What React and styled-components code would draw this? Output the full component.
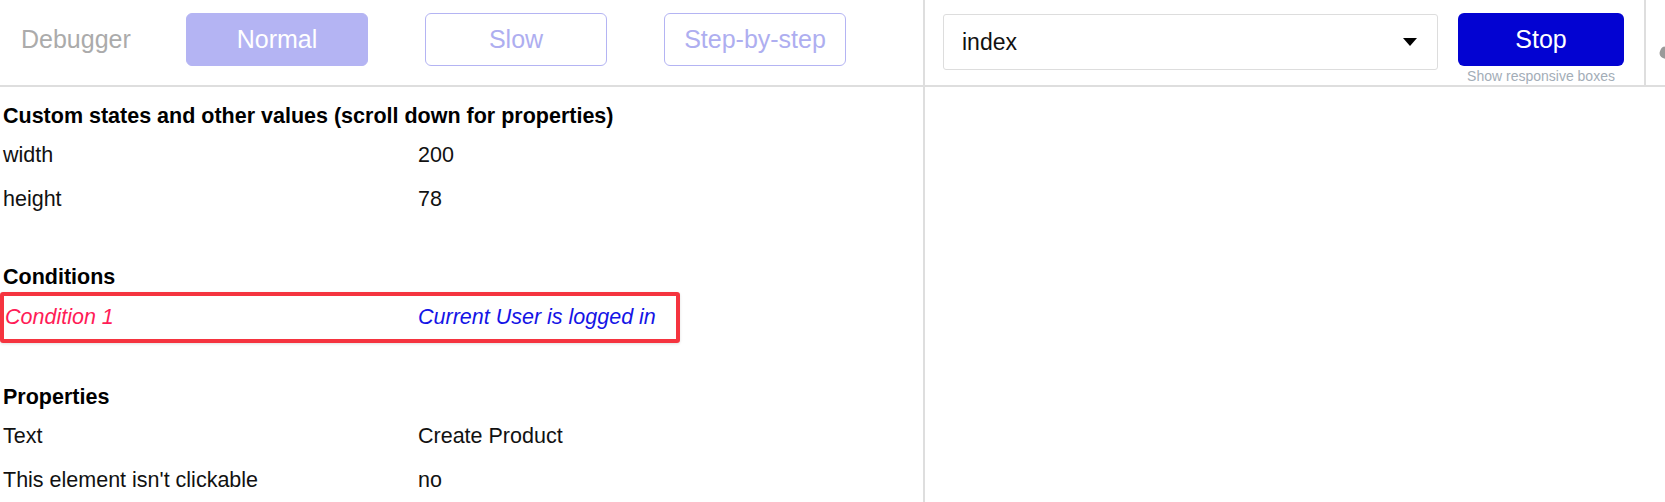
import React from 'react'
import styled, { createGlobalStyle } from 'styled-components'

const Global = createGlobalStyle`
  html, body {
    margin: 0;
    padding: 0;
    background: #fff;
    overflow: hidden;
    font-family: "Liberation Sans", Arial, Helvetica, sans-serif;
  }
`

const customStates = [
  { label: 'width', value: '200' },
  { label: 'height', value: '78' },
]

const properties = [
  { label: 'Text', value: 'Create Product' },
  { label: "This element isn't clickable", value: 'no' },
]

export default () => {
  return (
    <>
      <Global />
      <Page>
        <LeftPane>
          <Header>
            <Title>Debugger</Title>
            <ModeButton active>Normal</ModeButton>
            <ModeButton>Slow</ModeButton>
            <ModeButton>Step-by-step</ModeButton>
          </Header>
          <Content>
            <SectionTitle>Custom states and other values (scroll down for properties)</SectionTitle>
            {customStates.map(r => (
              <Row key={r.label}>
                <Label>{r.label}</Label>
                <Value>{r.value}</Value>
              </Row>
            ))}
            <SectionTitle spaced tight>Conditions</SectionTitle>
            <ConditionBox>
              <CondName>Condition 1</CondName>
              <CondText>Current User is logged in</CondText>
            </ConditionBox>
            <SectionTitle spaced>Properties</SectionTitle>
            {properties.map(r => (
              <Row key={r.label}>
                <Label>{r.label}</Label>
                <Value>{r.value}</Value>
              </Row>
            ))}
          </Content>
        </LeftPane>
        <RightPane>
          <RightHeader>
            <Select>
              <span>index</span>
              <Caret />
            </Select>
            <StopGroup>
              <StopButton>Stop</StopButton>
              <Hint>Show responsive boxes</Hint>
            </StopGroup>
            <Tools>
              <ToolDot />
            </Tools>
          </RightHeader>
        </RightPane>
      </Page>
    </>
  )
}

const Page = styled.div`
  display: flex;
  height: 502px;
  width: 1665px;
  overflow: hidden;
`

const LeftPane = styled.div`
  width: 923px;
  flex-shrink: 0;
  border-right: 2px solid #dedede;
  display: flex;
  flex-direction: column;
`

const RightPane = styled.div`
  flex: 1;
  display: flex;
  flex-direction: column;
  min-width: 0;
`

const Header = styled.div`
  height: 87px;
  flex-shrink: 0;
  box-sizing: border-box;
  border-bottom: 2px solid #dedede;
  display: flex;
  align-items: flex-start;
  padding: 13px 0 0 21px;
`

const Title = styled.div`
  width: 165px;
  line-height: 53px;
  font-size: 25px;
  color: #ababab;
`

const ModeButton = styled.div`
  width: 182px;
  height: 53px;
  box-sizing: border-box;
  margin-right: 57px;
  border-radius: 6px;
  border: 1.5px solid #b4b4f3;
  background: ${p => (p.active ? '#b4b4f3' : '#fff')};
  color: ${p => (p.active ? '#fff' : '#aeaef0')};
  font-size: 25px;
  display: flex;
  align-items: center;
  justify-content: center;
`

const RightHeader = styled.div`
  height: 87px;
  flex-shrink: 0;
  box-sizing: border-box;
  border-bottom: 2px solid #dedede;
  display: flex;
  align-items: flex-start;
  padding: 13px 0 0 18px;
`

const Select = styled.div`
  width: 495px;
  height: 56px;
  margin-top: 1px;
  box-sizing: border-box;
  border: 1.5px solid #dddddd;
  border-radius: 3px;
  display: flex;
  align-items: center;
  justify-content: space-between;
  padding: 0 20px 0 18px;
  font-size: 23px;
  color: #111;
`

const Caret = styled.div`
  width: 0;
  height: 0;
  border-left: 7px solid transparent;
  border-right: 7px solid transparent;
  border-top: 8px solid #000;
`

const StopGroup = styled.div`
  margin-left: 20px;
  width: 166px;
  display: flex;
  flex-direction: column;
  align-items: center;
`

const StopButton = styled.div`
  width: 166px;
  height: 53px;
  border-radius: 6px;
  background: #0303d2;
  color: #fff;
  font-size: 25px;
  display: flex;
  align-items: center;
  justify-content: center;
`

const Hint = styled.div`
  margin-top: 2px;
  font-size: 14px;
  color: #a3adb7;
  white-space: nowrap;
`

const Tools = styled.div`
  margin-left: 20px;
  margin-top: -13px;
  height: 85px;
  flex: 1;
  border-left: 2px solid #dedede;
  display: flex;
  align-items: center;
  justify-content: flex-end;
  overflow: hidden;
`

const ToolDot = styled.div`
  width: 8px;
  height: 12px;
  margin-top: 18px;
  margin-right: -3px;
  border-radius: 5px 0 0 5px;
  background: #9a9a9a;
  transform: rotate(20deg);
`

const Content = styled.div`
  padding: 17px 0 0 3px;
`

const SectionTitle = styled.div`
  font-size: 21.5px;
  font-weight: 700;
  line-height: 24px;
  color: #000;
  margin-top: ${p => (p.spaced ? '34px' : '0')};
  margin-bottom: ${p => (p.tight ? '3px' : '15px')};
`

const Row = styled.div`
  display: flex;
  font-size: 21.5px;
  line-height: 24px;
  color: #111;
  padding-bottom: 20px;
`

const Label = styled.div`
  width: 415px;
  flex-shrink: 0;
`

const Value = styled.div``

const ConditionBox = styled.div`
  width: 680px;
  height: 51px;
  box-sizing: border-box;
  margin: 0 0 42px -3px;
  border: 4px solid #f5343f;
  border-radius: 3px;
  box-shadow: 0 1px 3px rgba(0, 0, 0, 0.12);
  display: flex;
  align-items: center;
  padding-left: 1px;
  font-size: 21.5px;
  font-style: italic;
`

const CondName = styled.div`
  width: 413px;
  color: #ff1c57;
`

const CondText = styled.div`
  color: #1414e6;
`
